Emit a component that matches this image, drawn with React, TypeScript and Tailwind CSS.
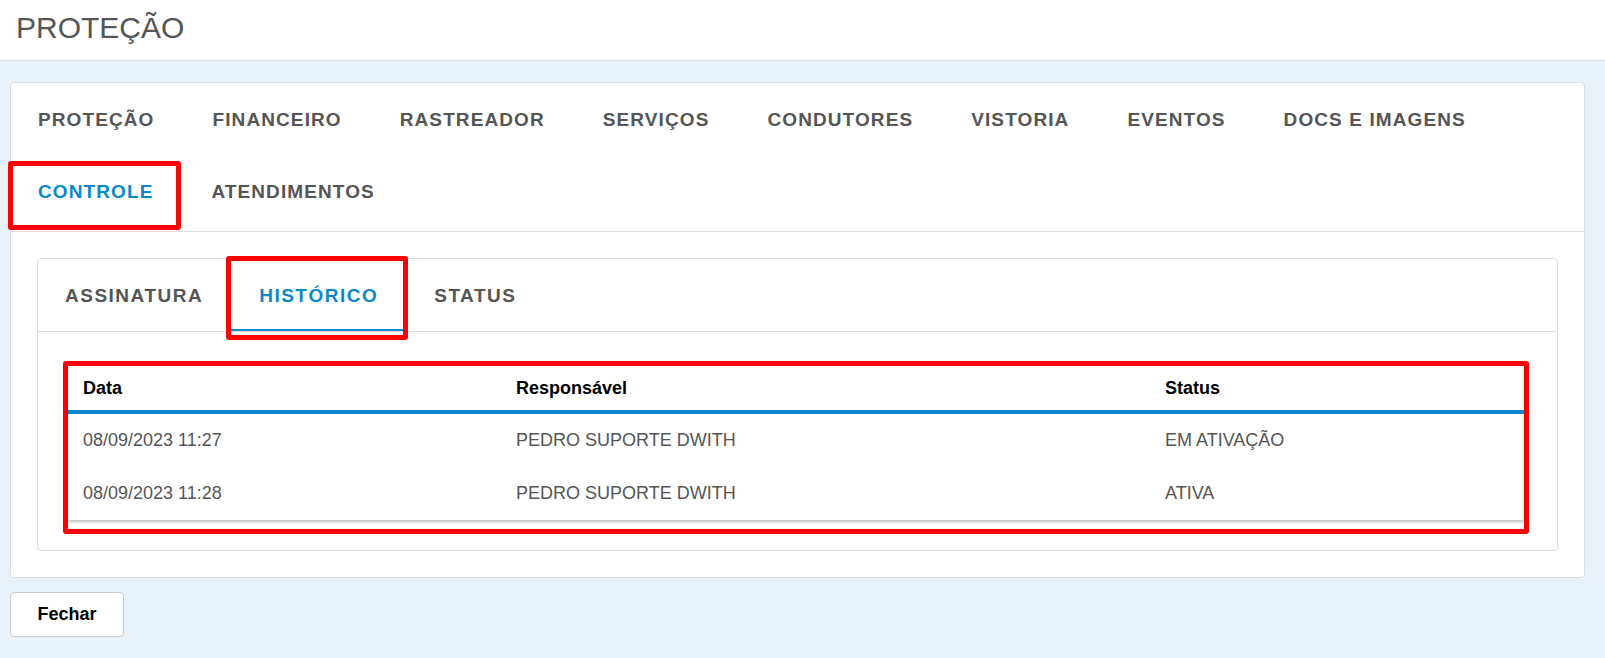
import React, { useState } from "react";

const mainTabs = [
  "PROTEÇÃO",
  "FINANCEIRO",
  "RASTREADOR",
  "SERVIÇOS",
  "CONDUTORES",
  "VISTORIA",
  "EVENTOS",
  "DOCS E IMAGENS",
  "CONTROLE",
  "ATENDIMENTOS",
];

const subTabs = ["ASSINATURA", "HISTÓRICO", "STATUS"];

const historico = [
  { data: "08/09/2023 11:27", responsavel: "PEDRO SUPORTE DWITH", status: "EM ATIVAÇÃO" },
  { data: "08/09/2023 11:28", responsavel: "PEDRO SUPORTE DWITH", status: "ATIVA" },
];

const App = () => {
  const [tab, setTab] = useState("CONTROLE");
  const [subTab, setSubTab] = useState("HISTÓRICO");

  return (
    <div className="min-h-[658px] bg-[#eaf2f9] font-['Liberation_Sans',Arial,sans-serif]">
      {/* cabeçalho */}
      <div className="h-[61px] bg-white border-b border-[#dcdfe3] flex items-center pl-[16px]">
        <h1 className="text-[30px] text-[#555] leading-none -mt-[5px]">PROTEÇÃO</h1>
      </div>

      <div className="ml-[10px] mr-[20px] mt-[21px] bg-white border border-[#dddddd] rounded-[4px]">
        {/* abas principais */}
        <div className="flex flex-wrap gap-x-[4px] pt-[1px] pb-[3px] border-b border-[#dddddd]">
          {mainTabs.map((t) => (
            <button
              key={t}
              onClick={() => setTab(t)}
              className={`relative h-[72px] px-[27px] text-[19px] font-bold tracking-[1.1px] ${
                tab === t ? "text-[#0a88cc]" : "text-[#555]"
              }`}
            >
              {t}
              {t === "CONTROLE" && (
                <span className="absolute -left-[3px] -right-[1px] top-[5px] -bottom-[2px] border-[5px] border-[#ff0000] rounded-[3px]" />
              )}
            </button>
          ))}
        </div>

        <div className="p-[26px]">
          <div className="border border-[#dddddd] rounded-[4px]">
            {/* sub abas */}
            <div className="flex gap-x-[2px] border-b border-[#dddddd]">
              {subTabs.map((t) => (
                <button
                  key={t}
                  onClick={() => setSubTab(t)}
                  className={`relative h-[72px] px-[27px] pt-[3px] text-[19px] font-bold tracking-[1.5px] ${
                    subTab === t ? "text-[#0a88cc]" : "text-[#555]"
                  }`}
                >
                  {t}
                  {subTab === t && (
                    <span className="absolute -left-[1px] -right-[2px] bottom-0 h-[2px] bg-[#0a88cc]" />
                  )}
                  {t === "HISTÓRICO" && (
                    <span className="absolute -left-[6px] -right-[3px] -top-[3px] -bottom-[9px] border-[5px] border-[#ff0000] rounded-[3px]" />
                  )}
                </button>
              ))}
            </div>

            <div className="pt-[29px] pl-[25px] pr-[28px] pb-[16px]">
              <div className="border-[5px] border-[#ff0000] rounded-[3px] pb-[9px]">
                <div className="bg-white shadow-[0_2px_3px_rgba(0,0,0,0.25)]">
                  <div className="grid grid-cols-[433px_649px_1fr] h-[48px] items-center border-b-4 border-[#0a88cc] text-[18px] font-bold text-black">
                    <div className="pl-[15px]">Data</div>
                    <div className="pl-[15px]">Responsável</div>
                    <div className="pl-[15px]">Status</div>
                  </div>
                  {historico.map((row) => (
                    <div
                      key={row.data}
                      className="grid grid-cols-[433px_649px_1fr] h-[53px] items-center text-[18px] text-[#555]"
                    >
                      <div className="pl-[15px]">{row.data}</div>
                      <div className="pl-[15px]">{row.responsavel}</div>
                      <div className="pl-[15px]">{row.status}</div>
                    </div>
                  ))}
                </div>
              </div>
            </div>
          </div>
        </div>
      </div>

      <div className="ml-[10px] mt-[14px]">
        <button className="w-[114px] h-[45px] bg-white border border-[#cccccc] rounded-[4px] text-[18px] font-bold text-black">
          Fechar
        </button>
      </div>
    </div>
  );
};

export default App;
